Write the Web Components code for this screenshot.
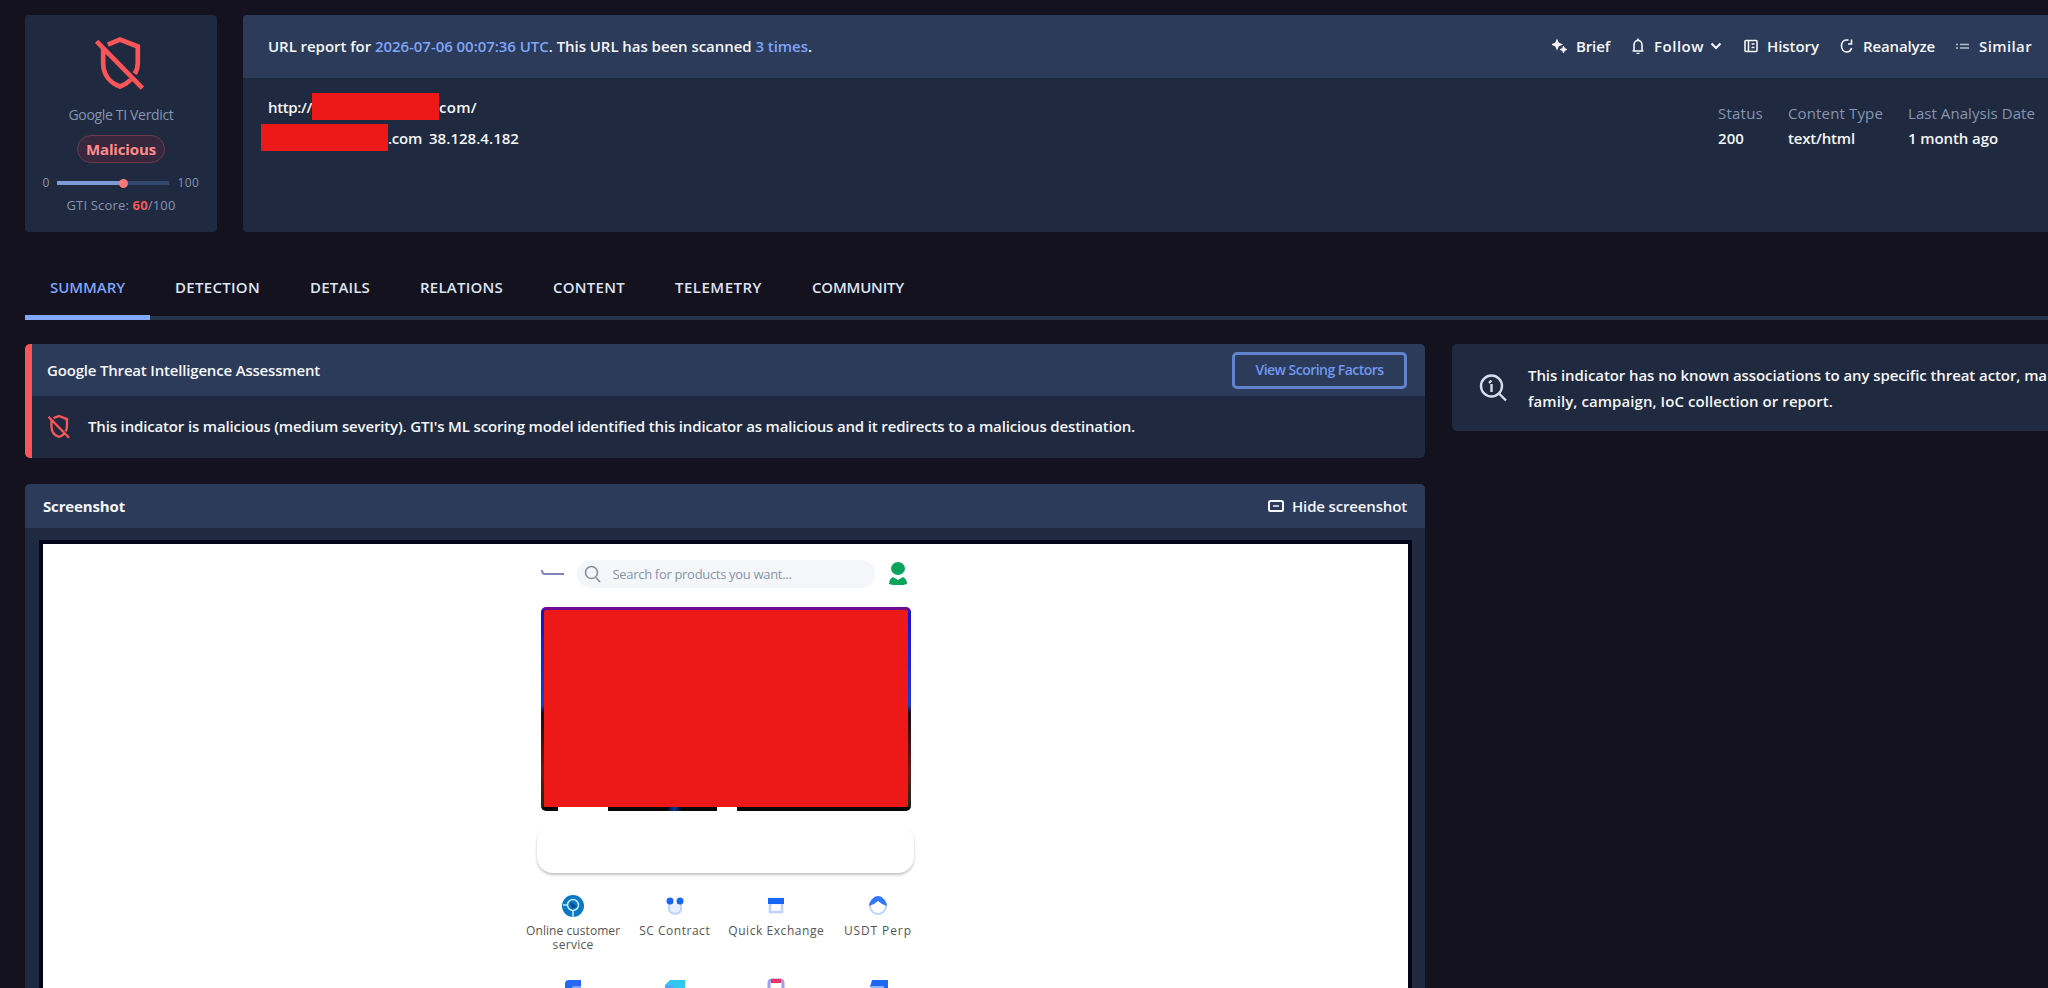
<!DOCTYPE html>
<html lang="en">
<head>
<meta charset="utf-8">
<title>URL report</title>
<style>
*,*::before,*::after{
  box-sizing: border-box;
}
html,body{
  margin: 0;
  height: 988px;
  overflow: hidden;
}
body{
  --card: #1f2a40;
  --bar: #2b3b59;
  --blue: #7fa5fa;
  --red: #fb5557;
  --muted: #8794b0;
  background: #13121e;
  color: #f5f6fa;
  font: 600 15px/20px "Open Sans", "Noto Sans", sans-serif;
  padding: 15px 0 0 25px;
}
.top{
  display: flex;
  gap: 26px;
  height: 217px;
}
.columns{
  display: grid;
  grid-template-columns: 1400px 1fr;
  gap: 27px;
  margin-top: 24px;
}
.main{
  display: flex;
  flex-direction: column;
  gap: 26px;
}
</style>
</head>
<body>
<div class="top">
  <gti-verdict></gti-verdict>
  <gti-report></gti-report>
</div>
<gti-tabs></gti-tabs>
<div class="columns">
  <div class="main">
    <gti-card class="assessment" alert style="--head:52px;height:114px">
      <ui-label slot="title" w="273" style="margin-left:-3px">Google Threat Intelligence Assessment</ui-label>
      <gti-button slot="action"><ui-label w="128">View Scoring Factors</ui-label></gti-button>
      <gti-finding></gti-finding>
    </gti-card>
    <gti-card style="--head:44px;height:520px">
      <ui-label slot="title" w="82" style="font-size:15px;font-weight:700">Screenshot</ui-label>
      <gti-action slot="action" icon="monitor"><ui-label w="115">Hide screenshot</ui-label></gti-action>
      <page-preview></page-preview>
    </gti-card>
  </div>
  <gti-notice></gti-notice>
</div>

<script>
const shieldOff = `<path d="M9 6.2 15.5 3.5 25 7.2V16c0 2.2-.5 4-1.6 5.8M6.5 8.3V16c0 6.600 4 10.800 9 12.600 2.300-.8 4.200-2 5.700-3.600M3 4.500 27.500 29.500" fill="none" stroke="currentColor"/>`;

const icons = {
  brief: `<path d="M5 2.500 6.200 5.300 9 6.500 6.200 7.700 5 10.500 3.800 7.700 1 6.500 3.800 5.300Z" fill="currentColor"/><path d="m11.500 8 .9 2.600 2.600.9-2.600.9-.9 2.600-.9-2.600-2.600-.9 2.600-.9Z" fill="currentColor" stroke-width="1"/>`,
  bell: `<path d="M2.500 13h11M4 13V7a4 4.600 0 0 1 8 0v6M8 .5v2M6.500 15.500h3"/>`,
  history: `<rect x="2" y="2.500" width="12" height="11" rx="1"/><path d="M5.500 2.500v11M8.500 6h3M8.500 9.500h3"/>`,
  refresh: `<path d="M9.500 2H7.500C4 2 2.500 5 2.500 8s2 6 5 6c2.500 0 4.500-1.500 5-4M12.500 1.500V6H9"/>`,
  similar: `<path d="M1 6.500h2M5 6.500h9M1 10h2M5 10h9" opacity=".7"/>`,
  monitor: `<rect x="1" y="3" width="14" height="10" rx="1.500" stroke-width="2"/><path d="M5 8h6"/>`,
};

function define(name, html, setup) {
  const template = document.createElement("template");
  template.innerHTML = `<style>
    *,*::before,*::after{ box-sizing: border-box; }
    svg{ display: block; flex: none; }
  </style>${html}`;
  customElements.define(name, class extends HTMLElement {
    constructor() {
      super();
      this.$root = this.attachShadow({ mode: "open" });
      this.$root.appendChild(template.content.cloneNode(true));
    }
    connectedCallback() {
      if (setup) setup(this, this.$root);
    }
  });
}

define("gti-verdict", `<style>
:host{
  display: flex;
  flex-direction: column;
  align-items: center;
  width: 192px;
  background: var(--card);
  border-radius: 4px;
  padding-top: 18px;
  color: var(--muted);
  font-size: 12px;
  font-weight: 400;
}
.shield{ color: var(--red); margin-right: 2px; }
.name{ margin-top: 14px; height: 20px; font-size: 14px; }
.pill{
  display: flex;
  justify-content: center;
  width: 88px;
  height: 28px;
  margin-top: 10px;
  padding-top: 3px;
  border: 1px solid #71384b;
  border-radius: 14px;
  background: #37283d;
  color: #ff8d8d;
  font-size: 15px;
  font-weight: 700;
}
.scale{
  display: flex;
  align-items: center;
  gap: 8px;
  height: 20px;
  margin-top: 10px;
}
.track{
  display: flex;
  align-items: center;
  width: 112px;
  height: 4px;
  background: linear-gradient(90deg, #7e9bd6 60%, #32476d 60%);
}
.track::after{
  content: "";
  width: 9px;
  height: 9px;
  margin-left: 62px;
  border-radius: 50%;
  background: #ff7778;
}
.score{ margin-top: 2px; font-size: 13px; }
b{ color: var(--red); }
</style>
<svg class="shield" width="58" height="58" viewBox="0 0 31 31" stroke-width="2.500">${shieldOff}</svg>
<div class="name"><ui-label w="105">Google TI Verdict</ui-label></div>
<div class="pill"><ui-label w="70">Malicious</ui-label></div>
<div class="scale"><span>0</span><span class="track"></span><ui-label w="22">100</ui-label></div>
<div class="score"><ui-label w="109">GTI Score: <b>60</b>/100</ui-label></div>`);

define("gti-action", `<style>
:host{
  display: flex;
  align-items: center;
  gap: 8px;
}
svg{ fill: none; stroke: currentColor; stroke-width: 1.600; }
</style>
<svg width="16" height="16" viewBox="0 0 16 16"></svg><slot></slot>`,
(host, root) => {
  root.querySelector("svg").innerHTML = icons[host.getAttribute("icon")];
});

define("gti-report", `<style>
:host{
  display: block;
  flex: 1;
  background: var(--card);
  border-radius: 4px 0 0 4px;
  overflow: hidden;
}
header{
  display: flex;
  justify-content: space-between;
  align-items: center;
  height: 63px;
  padding: 0 16px 2px 25px;
  background: var(--bar);
}
a{ color: var(--blue); }
.actions{ display: flex; gap: 20px; }
.body{
  display: flex;
  justify-content: space-between;
  padding: 15px 13px 0 18px;
}
.row{
  display: flex;
  align-items: center;
  height: 27px;
  margin-bottom: 4px;
  white-space: pre;
}
.row:first-child{ padding-left: 7px; }
.block{ width: 127px; height: 27px; background: #ed1818; }
.row ui-label + ui-label{ margin-left: 7px; }
.facts{ display: flex; gap: 25px; padding-top: 10px; }
dl{ margin: 0; }
dt{ height: 25px; color: var(--muted); font-weight: 400; }
dd{ margin: 0; }
</style>
<header>
  <ui-label w="544">URL report for <a>2026-07-06 00:07:36 UTC</a>. This URL has been scanned <a>3 times</a>.</ui-label>
  <div class="actions">
    <gti-action icon="brief"><ui-label w="34">Brief</ui-label></gti-action>
    <gti-action icon="bell"><ui-label w="50">Follow</ui-label><svg width="14" height="10" viewBox="0 0 12 10" style="margin-left:-3px"><path d="m1.500 2.500 4.500 4.500 4.500-4.500" fill="none" stroke="currentColor" stroke-width="2"/></svg></gti-action>
    <gti-action icon="history"><ui-label w="52">History</ui-label></gti-action>
    <gti-action icon="refresh"><ui-label w="72">Reanalyze</ui-label></gti-action>
    <gti-action icon="similar"><ui-label w="53">Similar</ui-label></gti-action>
  </div>
</header>
<div class="body">
  <div>
    <div class="row"><ui-label w="44">http://</ui-label><span class="block"></span><ui-label w="38">com/</ui-label></div>
    <div class="row"><span class="block"></span><ui-label w="34">.com</ui-label><ui-label w="90">38.128.4.182</ui-label></div>
  </div>
  <div class="facts">
    <dl><dt><ui-label w="45">Status</ui-label></dt><dd><ui-label w="26">200</ui-label></dd></dl>
    <dl><dt><ui-label w="95">Content Type</ui-label></dt><dd><ui-label w="67">text/html</ui-label></dd></dl>
    <dl><dt><ui-label w="127">Last Analysis Date</ui-label></dt><dd><ui-label w="90">1 month ago</ui-label></dd></dl>
  </div>
</div>`);

define("gti-tabs", `<style>
:host{
  display: flex;
  height: 88px;
  padding-top: 26px;
  border-bottom: 4px solid #26344c;
}
span{
  height: 62px;
  padding: 19px 25px 0;
  color: #dde4f3;
}
.active{ color: var(--blue); border-bottom: 5px solid #83a8f8; }
</style>
<span class="active"><ui-label w="75">SUMMARY</ui-label></span>
<span><ui-label w="85">DETECTION</ui-label></span>
<span><ui-label w="60">DETAILS</ui-label></span>
<span><ui-label w="83">RELATIONS</ui-label></span>
<span><ui-label w="72">CONTENT</ui-label></span>
<span><ui-label w="87">TELEMETRY</ui-label></span>
<span><ui-label w="92">COMMUNITY</ui-label></span>`);

define("gti-card", `<style>
:host{
  display: block;
  background: var(--card);
  border-radius: 5px;
  overflow: hidden;
}
:host([alert]){ border-left: 7px solid var(--red); }
header{
  display: flex;
  justify-content: space-between;
  align-items: center;
  height: var(--head);
  padding: 0 18px;
  background: var(--bar);
}
</style>
<header><slot name="title"></slot><slot name="action"></slot></header>
<slot></slot>`);

define("gti-button", `<style>
:host{
  display: flex;
  align-items: center;
  justify-content: center;
  width: 175px;
  height: 37px;
  border: 3px solid #5f84cd;
  border-radius: 5px;
  color: #7198ef;
  font-size: 14px;
}
</style><slot></slot>`);

define("gti-finding", `<style>
:host{
  display: flex;
  align-items: center;
  gap: 16px;
  height: 60px;
  padding-left: 14px;
}
svg{ color: var(--red); }
</style>
<svg width="26" height="26" viewBox="0 0 31 31" stroke-width="2.800">${shieldOff}</svg>
<ui-label w="1047">This indicator is malicious (medium severity). GTI's ML scoring model identified this indicator as malicious and it redirects to a malicious destination.</ui-label>`);

define("gti-notice", `<style>
:host{
  display: flex;
  align-items: center;
  gap: 20px;
  align-self: start;
  height: 87px;
  padding-left: 26px;
  border-radius: 5px 0 0 5px;
  background: var(--card);
  line-height: 26px;
  overflow: hidden;
}
svg{ color: #d6dded; }
div div{ height: 26px; }
</style>
<svg width="30" height="30" viewBox="0 0 30 30" fill="none" stroke="currentColor" stroke-width="2.400"><circle cx="13.500" cy="13" r="10.500"/><path d="m21 20.500 7 7M13.500 11v8M11 10l2.500-2.500"/></svg>
<div>
  <div><ui-label w="519">This indicator has no known associations to any specific threat actor, ma</ui-label></div>
  <div><ui-label w="305">family, campaign, IoC collection or report.</ui-label></div>
</div>`);

define("app-link", `<style>
:host{
  display: flex;
  flex-direction: column;
  align-items: center;
  gap: 7px;
  text-align: center;
}
</style>
<slot name="icon"></slot><slot></slot>`);

define("page-preview", `<style>
:host{
  display: flex;
  flex-direction: column;
  align-items: center;
  width: 1365px;
  height: 460px;
  margin: 16px 0 0 18px;
  background: #fff;
  box-shadow: 0 0 0 4px #03031a;
  color: #555;
  font-size: 12px;
  font-weight: 400;
  line-height: 14px;
}
.bar{
  display: flex;
  align-items: center;
  width: 370px;
  height: 28px;
  margin-top: 16px;
}
.search{
  display: flex;
  align-items: center;
  gap: 12px;
  width: 298px;
  height: 28px;
  margin: 0 12px;
  padding-left: 7px;
  border-radius: 14px;
  background: #f4f6f9;
  color: #8795a8;
  font-size: 13px;
}
.banner{
  width: 370px;
  height: 204px;
  margin-top: 19px;
  padding: 3px 3px 4px;
  border-radius: 5px;
  background:
    linear-gradient(#ed1818, #ed1818) content-box,
    linear-gradient(#6f0a90, #6f0a90) top / 100% 3px no-repeat,
    linear-gradient(90deg, #080808 4.500%, #fff 4.500% 18%, #080808 18% 34%, #1038a0 36%, #080808 38% 47.500%, #fff 47.500% 53%, #080808 53%) bottom / 100% 4px no-repeat,
    linear-gradient(#1212d0, #1440c8 48%, #180c14 52%, #6a1a14 80%, #083018);
}
.notice{
  width: 377px;
  height: 47px;
  margin-top: 15px;
  border-radius: 16px;
  box-shadow: 0 2px 3px #c4c4c4;
}
.links{
  display: grid;
  grid-template-columns: repeat(4, 101.600px);
  margin-top: 22px;
  row-gap: 26px;
}
</style>
<div class="bar">
  <svg width="24" height="10" viewBox="0 0 24 10" fill="none" stroke="#8581bd" stroke-width="2"><path d="M1 1c0 3 1 4 3 4h19"/></svg>
  <div class="search">
    <svg width="17" height="18" viewBox="0 0 17 18" fill="none" stroke="#84909d" stroke-width="1.600"><circle cx="7.500" cy="7.500" r="6"/><path d="m12 12.500 4 4.500"/></svg>
    <ui-label w="179">Search for products you want...</ui-label>
  </div>
  <svg width="20" height="24" viewBox="0 0 20 24" fill="#08a45b"><ellipse cx="11" cy="6.500" rx="7" ry="6.500"/><path d="M2 22c0-4 2-6 4-7l5 3 5-3c2 1 4 3 4 7l-4 1H6Z"/></svg>
</div>
<div class="banner"></div>
<div class="notice"></div>
<div class="links">
  <app-link><svg slot="icon" width="22" height="22" viewBox="0 0 22 22"><circle cx="11" cy="11" r="11" fill="#0a79c5"/><circle cx="11" cy="10" r="5.500" fill="none" stroke="#c5e8fa" stroke-width="1.500"/><path d="m8 7 7 4-5 3Z" fill="#064b91"/><path d="M11 15v7M1 10h4" stroke="#c5e8fa" stroke-width="1.500"/></svg><span><ui-label w="94">Online customer</ui-label><br><ui-label w="41">service</ui-label></span></app-link>
  <app-link><svg slot="icon" width="22" height="22" viewBox="0 0 22 22"><path d="M5 8v6q0 4 6 5 6-1 6-5V8" fill="#e7efff" stroke="#bdd2ff" stroke-width="2"/><circle cx="6" cy="6" r="3.500" fill="#1767f5"/><circle cx="16" cy="6" r="3.500" fill="#1767f5"/></svg><ui-label w="71">SC Contract</ui-label></app-link>
  <app-link><svg slot="icon" width="22" height="22" viewBox="0 0 22 22"><path d="M5 8h12v9H5Z" fill="#fff" stroke="#bdd2ff" stroke-width="2.500"/><path d="M3 3h16v6H3Z" fill="#1767f5"/></svg><ui-label w="96">Quick Exchange</ui-label></app-link>
  <app-link><svg slot="icon" width="22" height="22" viewBox="0 0 22 22"><circle cx="11" cy="11" r="8" fill="#fff" stroke="#bdd2ff" stroke-width="2"/><path d="M2 11C3 4 8 1 11 1s8 3 9 10l-5-2-4-3-4 3Z" fill="#3478fa"/></svg><ui-label w="68">USDT Perp</ui-label></app-link>
  <app-link><svg slot="icon" width="22" height="22" viewBox="0 0 22 22"><path d="M3 22V6q0-4 4-4h12v20Z" fill="#2468f5"/><path d="M10 22V10q0-2 2-2h7v14Z" fill="#7ea5fa"/></svg></app-link>
  <app-link><svg slot="icon" width="22" height="22" viewBox="0 0 22 22"><path d="M1 22V7l5-5h15v20Z" fill="#31c8ef"/><path d="M1 7h9v15H1Z" fill="#55a7f5"/></svg></app-link>
  <app-link><svg slot="icon" width="22" height="22" viewBox="0 0 22 22"><path d="M4 22V5q0-3 3-3h8q3 0 3 3v17" fill="#fff" stroke="#9c9eee" stroke-width="3"/><path d="M6 1h10v4H6Z" fill="#e83765"/></svg></app-link>
  <app-link><svg slot="icon" width="22" height="22" viewBox="0 0 22 22"><path d="M5 2h16v20h-6V9H3Z" fill="#1c68f5"/><path d="M5 22V9h11v13" fill="#fff" stroke="#8fb3ff" stroke-width="2"/></svg></app-link>
</div>`);

// one line of text, tracked so that it fills the width given in w
define("ui-label", `<style>
:host{
  display: inline-block;
  white-space: nowrap;
}
</style><slot></slot>`,
(host) => {
  const want = Number(host.getAttribute("w"));
  const natural = host.getBoundingClientRect().width;
  host.style.letterSpacing = `${(want - natural) / host.textContent.length}px`;
});
</script>
</body>
</html>
